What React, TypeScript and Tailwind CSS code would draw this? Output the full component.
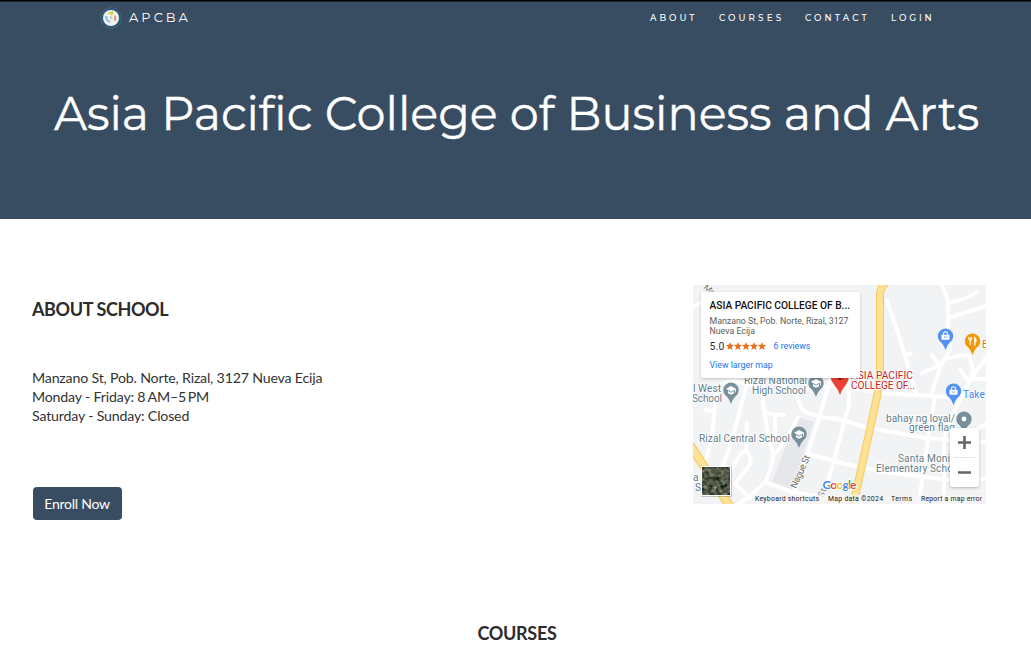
import React from "react";

const roads = [
  "M194 15C197 26 202 38 204 44L223 108",
  "M212 70L218 69",
  "M249 0C251 7 255 12 255 18V45L257 65L249 78L242 98L238 110",
  "M255 18Q273 15 284 7",
  "M255 33L293 21",
  "M251 74L270 70Q276 70 277 74L280 84L278 94L266 117L255 140L251 154V220",
  "M239 70L246 80L229 88",
  "M267 85L274 94H293",
  "M293 73L280 91",
  "M188 108L255 112",
  "M293 139L275 149",
  "M142 133L172 142L232 153L293 157",
  "M242 111L235 154L230 190L225 220",
  "M0 22L7 18",
  "M142 177L168 182L192 187L257 195L293 194",
  "M156 92V118Q156 124 153 130L142 172L132 206L128 220",
  "M100 104L109 124Q112 128 129 132L147 135",
  "M137 95L125 137L114 170L102 204L96 220",
  "M115 169L147 177",
  "M24 104L19 150L12 179",
  "M12 125L22 126",
  "M53 102L42 144L35 167L27 189",
  "M54 138L53 165Q61 176 55 182L42 199L57 213",
  "M52 166Q47 168 43 177L35 188",
  "M70 96V117L74 144L80 169Q81 178 72 197L57 211L44 220",
  "M70 124Q72 130 92 130M82 131V149",
  "M80 171L94 154L105 132",
  "M72 197L99 207L145 215",
  "M20 105Q32 94 46 97L75 105",
  "M84 94L100 107L137 101L188 107",
];

function Pin({ x, y, color, kind }: { x: number; y: number; color: string; kind: string }) {
  return (
    <g transform={`translate(${x} ${y})`}>
      <path d="M-6.2 4.7A7.7 7.7 0 1 1 6.2 4.7Q2 8 0 14Q-2 8-6.2 4.7Z" fill={color} />
      {kind === "school" && (
        <path d="M-5-1.2L0-4L5-1.2V2.5H4.2V-.5L0 1.8ZM-3 1V3.2L0 4.8L3 3.2V1L0 2.7Z" fill="#fff" />
      )}
      {kind === "bag" && (
        <g>
          <rect x="-4" y="-1.3" width="8" height="5" rx=".6" fill="#fff" />
          <path d="M-2-1.3V-3Q0-5.4 2-3V-1.3" fill="none" stroke="#fff" strokeWidth="1.1" />
          <path d="M-1.6 .5Q0 2.7 1.6 .5" fill="none" stroke={color} strokeWidth=".9" />
        </g>
      )}
      {kind === "food" && (
        <g stroke="#fff" fill="none">
          <path d="M-3.7-4V-1.2Q-2.3 .3-.9-1.2V-4M-2.3-4V4.5" strokeWidth="1" />
          <path d="M2.3 4.5V-3.5Q3.7-2.7 3.5 .4H2.3" strokeWidth="1.3" />
        </g>
      )}
      {kind === "dot" && <circle r="2.4" fill="#fff" />}
    </g>
  );
}

function Label({ x, y, w, children, color = "#607d8b", size = 10.2, rotate = 0 }: {
  x: number; y: number; w: number; children: string; color?: string; size?: number; rotate?: number;
}) {
  return (
    <text
      x={x}
      y={y}
      textLength={w}
      fontSize={size}
      fill={color}
      stroke="#fff"
      strokeWidth="1.6"
      paintOrder="stroke"
      strokeLinejoin="round"
      transform={rotate ? `rotate(${rotate} ${x} ${y})` : undefined}
    >
      {children}
    </text>
  );
}

function MapDrawing() {
  return (
    <svg viewBox="0 0 293 219" className="block h-[219px] w-[293px] font-['Roboto',sans-serif]">
      <defs>
        <filter id="terrain" x="0" y="0" width="1" height="1" colorInterpolationFilters="sRGB">
          <feTurbulence type="fractalNoise" baseFrequency="0.25" numOctaves="4" seed="8" />
          <feColorMatrix values=".8 .3 0 0 -.24  .7 .3 0 0 -.16  .6 .3 0 0 -.18  0 0 0 0 1" />
        </filter>
      </defs>
      <rect width="293" height="219" fill="#f1f3f4" />
      <path d="M104 132L121 137L99 204L79 197Z" fill="#e6e7eb" />
      <g fill="none" stroke="#fff" strokeWidth="4" strokeLinecap="round" strokeLinejoin="round">
        {roads.map((d) => <path key={d} d={d} />)}
      </g>
      <g fill="none">
        <path d="M193-3Q187 3 187 9V80Q187 101 182 121L177 144L160 221" stroke="#f7c95c" strokeWidth="8" />
        <path d="M193-3Q187 3 187 9V80Q187 101 182 121L177 144L160 221" stroke="#fde293" strokeWidth="6" />
        <path d="M-3 160L38 223" stroke="#f7c95c" strokeWidth="9" />
        <path d="M-3 160L38 223" stroke="#fde293" strokeWidth="7" />
      </g>
      <Label x={10} y={3} w={16} rotate={42} size={9} color="#666">Man</Label>
      <Label x={51} y={98.5} w={63}>Rizal National</Label>
      <Label x={59} y={109} w={54}>High School</Label>
      <Label x={0} y={106.5} w={28}>l West</Label>
      <Label x={-1} y={117} w={30}>School</Label>
      <Label x={6} y={156.5} w={91}>Rizal Central School</Label>
      <Label x={193} y={136.5} w={69}>bahay ng loyal/</Label>
      <Label x={216} y={146} w={46}>green flag</Label>
      <Label x={205} y={177} w={52}>Santa Moni</Label>
      <Label x={183} y={187} w={77}>Elementary Scho</Label>
      <Label x={0} y={195.5} w={11}>ar</Label>
      <Label x={2} y={206} w={8}>S</Label>
      <Label x={103} y={204} w={35} rotate={-66} size={9.5} color="#666">Nague St</Label>
      <Label x={130} y={213} w={9} rotate={-66} size={9} color="#777">St</Label>
      <Label x={158} y={94} w={62} color="#c5221f">ASIA PACIFIC</Label>
      <Label x={158} y={104} w={64} color="#c5221f">COLLEGE OF...</Label>
      <Label x={270} y={113} w={22} color="#4285f4">Take</Label>
      <Label x={289} y={62.5} w={7} color="#e8710a">B</Label>
      <Pin x={38} y={105} color="#78909c" kind="school" />
      <Pin x={123} y={98} color="#78909c" kind="school" />
      <Pin x={106} y={149} color="#78909c" kind="school" />
      <Pin x={252.5} y={51} color="#5491f5" kind="bag" />
      <Pin x={279.5} y={56} color="#f29900" kind="food" />
      <Pin x={260.5} y={106} color="#5491f5" kind="bag" />
      <Pin x={271} y={134} color="#78909c" kind="dot" />
      <path d="M137 91Q138 96 142 101Q145 104 147 110Q149 104 152 101Q156 96 156 90Z" fill="#ea4335" />
      <path d="M143 92Q147 98 151 92" fill="#a50e0e" />
      <rect y="209.5" x="60" width="233" height="9.5" fill="#f5f5f5" fillOpacity=".75" />
      <g fontSize="6.9" fill="#222">
        <text x="62" y="216.3" textLength="64">Keyboard shortcuts</text>
        <text x="135" y="216.3" textLength="55">Map data ©2024</text>
        <text x="198" y="216.3" textLength="21">Terms</text>
        <text x="228" y="216.3" textLength="61">Report a map error</text>
      </g>
      <text x="129.5" y="203.5" fontSize="12" textLength="34" stroke="#fff" strokeWidth="2" paintOrder="stroke" className="font-['Lato',sans-serif] font-bold">
        <tspan fill="#4285f4">G</tspan><tspan fill="#ea4335">o</tspan><tspan fill="#fbbc04">o</tspan><tspan fill="#4285f4">g</tspan><tspan fill="#34a853">l</tspan><tspan fill="#ea4335">e</tspan>
      </text>
      <rect x="8" y="181" width="31" height="31" rx="1" fill="#0003" />
      <rect x="8" y="181" width="30" height="30" rx="1" fill="#fff" />
      <rect x="9.5" y="182.5" width="27" height="27" filter="url(#terrain)" />
    </svg>
  );
}

function Stars() {
  return (
    <svg viewBox="0 0 41 8" className="ml-[1px] h-[8px] w-[41px]" fill="#e7711b">
      {[0, 8, 16, 24, 32].map((x) => (
        <path key={x} transform={`translate(${x} 0)`} d="M4 0L5.1 2.8L8.1 3L5.8 4.9L6.6 7.9L4 6.2L1.4 7.9L2.2 4.9L-.1 3L2.9 2.8Z" />
      ))}
    </svg>
  );
}

function Logo() {
  return (
    <svg viewBox="0 0 22 22" className="h-[22px] w-[22px]">
      <circle cx="11" cy="11" r="10.4" fill="#25507a" stroke="#4f6d5e" strokeWidth=".8" />
      <circle cx="11" cy="11" r="8.8" fill="none" stroke="#3f6f98" strokeWidth=".8" strokeDasharray="1 1" />
      <circle cx="11" cy="11" r="8" fill="#f0f3ee" />
      <path d="M8 7Q9 3.5 13.5 4.5Q14 7 12 8.5Q10 6.5 8 7Z" fill="#cdd64e" />
      <path d="M5 9Q4.5 14 10 16L10.5 14Q7 13 7.5 9Z" fill="#8fc3e4" />
      <path d="M15 8Q17.5 11 15.5 14.5L13.5 13Q14.8 11 14 9Z" fill="#ee9a6a" />
      <path d="M9.5 10Q11 8.5 12.5 10.5L11 12.5Z" fill="#a8cde2" />
    </svg>
  );
}

export default function App() {
  return (
    <div className="flex h-[656px] w-[1031px] flex-col overflow-hidden bg-white font-['Lato',sans-serif] text-[#333]">
      <header className="h-[219px] shrink-0 border-t border-black bg-[#394d62] text-white shadow-[inset_0_1px_0_#1c2631]">
        <nav className="flex h-[34px] items-center justify-between pr-[96px] pl-[100px] font-['Montserrat',sans-serif]">
          <a className="flex items-center gap-[7px] text-[13px] tracking-[3px] text-white"><Logo />APCBA</a>
          <div className="flex text-[8.8px] font-medium text-white">
            <a className="w-[69px] tracking-[3px]">ABOUT</a>
            <a className="w-[86px] tracking-[3.1px]">COURSES</a>
            <a className="w-[86px] tracking-[3.1px]">CONTACT</a>
            <a className="w-[44px] tracking-[2.9px]">LOGIN</a>
          </div>
        </nav>
        <h1 className="mt-[44px] pl-[54px] font-['Montserrat',sans-serif] text-[46.2px] leading-[70px] font-normal whitespace-nowrap [-webkit-text-stroke:0.35px_white]">
          Asia Pacific College of Business and Arts
        </h1>
      </header>
      <main className="flex flex-col">
        <section className="flex h-[285px] justify-between pt-[66px] pr-[45px] pl-[32px]">
          <div>
            <h2 className="mt-[12px] text-[18px] leading-[24px] font-bold tracking-[-0.4px] text-[#2c2c2c]">ABOUT SCHOOL</h2>
            <div className="mt-[47px] text-[14.2px] leading-[19px] tracking-[-0.19px]">
              <p>Manzano St, Pob. Norte, Rizal, 3127 Nueva Ecija</p>
              <p>Monday - Friday: 8<span className="ml-[1.5px]">{"\u200a"}AM–5</span><span className="ml-[1px]">{"\u200a"}PM</span></p>
              <p>Saturday - Sunday: Closed</p>
            </div>
            <button className="mt-[62px] ml-[0.5px] h-[33px] w-[89px] rounded-[4px] bg-[#394d62] text-[14px] tracking-[-0.25px] text-white">Enroll Now</button>
          </div>
          <div className="relative h-[219px] w-[293px]">
            <MapDrawing />
            <div className="absolute top-[7px] left-[8px] h-[86px] w-[159px] rounded-[2px] bg-white pt-[7px] pl-[8.5px] font-['Roboto',sans-serif] whitespace-nowrap shadow-[0_1px_3px_rgba(0,0,0,0.2)]">
              <p className="text-[10.2px] leading-[13px] font-medium text-[#111]">ASIA PACIFIC COLLEGE OF B...</p>
              <p className="mt-[4px] text-[8.8px] leading-[10px] text-[#5b5b5b]">Manzano St, Pob. Norte, Rizal, 3127<br />Nueva Ecija</p>
              <div className="mt-[3px] flex items-center text-[10.4px] leading-[13px] tracking-[0.2px] text-[#333]">5.0<Stars /><a className="mt-[1px] ml-[7px] text-[8.8px] tracking-normal text-[#1a73e8]">6 reviews</a></div>
              <a className="mt-[7px] block text-[8.8px] leading-[11px] text-[#1a73e8]">View larger map</a>
            </div>
            <div className="absolute top-[143px] left-[257px] h-[59px] w-[29px] rounded-[2px] bg-white shadow-[0_1px_3px_rgba(0,0,0,0.25)]">
              <svg viewBox="0 0 29 59" className="h-[59px] w-[29px]">
                <path d="M8 14.5H21M14.5 8V21M8 44.5H21" stroke="#666" strokeWidth="2.6" fill="none" />
                <path d="M4 29.5H25" stroke="#e6e6e6" />
              </svg>
            </div>
          </div>
        </section>
        <h2 className="mt-[117px] pl-[3px] text-center text-[18px] leading-[24px] font-bold tracking-[-0.3px] text-[#2c2c2c]">COURSES</h2>
      </main>
    </div>
  );
}
